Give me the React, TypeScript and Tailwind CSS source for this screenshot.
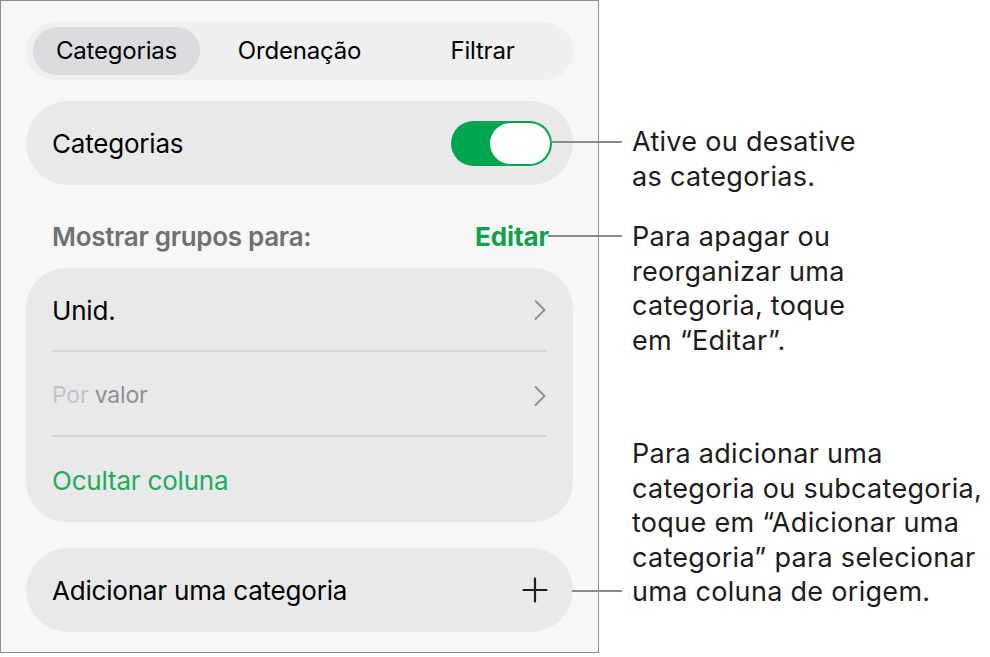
import React from "react";

function Chevron() {
  return (
    <svg width="14" height="22" viewBox="0 0 14 22" fill="none">
      <path d="M2.5 2 L11.5 11 L2.5 20" stroke="#8e8e93" strokeWidth="1.8" strokeLinecap="round" strokeLinejoin="round" />
    </svg>
  );
}

function Plus() {
  return (
    <svg width="26" height="26" viewBox="0 0 26 26" fill="none">
      <path d="M13 1.5 V24.5 M1.5 13 H24.5" stroke="#1c1c1e" strokeWidth="2.2" strokeLinecap="round" />
    </svg>
  );
}

export default function App() {
  return (
    <div
      className="relative flex w-[990px] h-[657px] bg-white text-black"
      style={{ fontFamily: "Inter, 'Noto Sans', sans-serif" }}
    >
      {/* Panel */}
      <div className="flex flex-col w-[599px] h-[653px] border border-[#8e8e8e] bg-[#f7f7f8] px-[25px] pt-[21px]">
        {/* Segmented control */}
        <div className="grid grid-cols-3 gap-[16px] h-[58px] rounded-full bg-[#efeff0] px-[7px] py-[5px]">
          <div className="flex items-center justify-center rounded-full bg-[#dcdce0] text-[24px] tracking-[-0.2px]">
            Categorias
          </div>
          <div className="flex items-center justify-center text-[24px] tracking-[-0.2px]">Ordenação</div>
          <div className="flex items-center justify-center text-[24px] tracking-[-0.2px]">Filtrar</div>
        </div>

        {/* Toggle card */}
        <div className="mt-[21px] flex items-center justify-between h-[84px] rounded-[42px] bg-[#e9e9eb] pl-[26px] pr-[21px]">
          <span className="text-[26px] tracking-[-0.2px]">Categorias</span>
          <div className="relative w-[101px] h-[45px] rounded-full bg-[#00a54f]">
            <div className="absolute right-[2px] top-[2px] w-[60px] h-[41px] rounded-full bg-white" />
          </div>
        </div>

        {/* Header */}
        <div className="flex items-center justify-between h-[83px] pt-[19px] pl-[26px] pr-[24px]">
          <span className="text-[26px] font-semibold text-[#707074] tracking-[-0.3px]">Mostrar grupos para:</span>
          <span className="text-[26px] font-bold text-[#12a04c] tracking-[-0.1px]">Editar</span>
        </div>

        {/* Group card */}
        <div className="flex flex-col rounded-[40px] bg-[#e9e9eb] px-[26px]">
          <div className="flex items-center justify-between h-[84px] pt-[2px] border-b-2 border-[#d4d4d6]">
            <span className="text-[26px] tracking-[-0.2px]">Unid.</span>
            <Chevron />
          </div>
          <div className="flex items-center justify-between h-[85px] pt-[4px] border-b-2 border-[#d4d4d6]">
            <span className="text-[23px] tracking-[-0.2px]">
              <span className="text-[#c3c3c7]">Por</span> <span className="text-[#8e8e93]">valor</span>
            </span>
            <Chevron />
          </div>
          <div className="flex items-center h-[85px] pt-[2px]">
            <span className="text-[26px] text-[#1cae57] tracking-[-0.2px]">Ocultar coluna</span>
          </div>
        </div>

        {/* Add card */}
        <div className="mt-[26px] flex items-center justify-between h-[84px] rounded-[42px] bg-[#e9e9eb] pl-[26px] pr-[25px]">
          <span className="text-[26px] tracking-[-0.2px]">Adicionar uma categoria</span>
          <Plus />
        </div>
      </div>

      {/* Callouts */}
      <div className="flex flex-col pl-[33px] pt-[125px] text-[27px] leading-[34.5px] tracking-[0.3px] text-[#1c1c1e]">
        <div>
          Ative ou desative
          <br />
          as categorias.
        </div>
        <div className="mt-[26px]">
          Para apagar ou
          <br />
          reorganizar uma
          <br />
          categoria, toque
          <br />
          em “Editar”.
        </div>
        <div className="mt-[79px]">
          Para adicionar uma
          <br />
          categoria ou subcategoria,
          <br />
          toque em “Adicionar uma
          <br />
          categoria” para selecionar
          <br />
          uma coluna de origem.
        </div>
      </div>

      {/* Leader lines */}
      <div className="absolute left-[551px] top-[141px] w-[71px] h-[2px] bg-[#8a8a8a]" />
      <div className="absolute left-[548px] top-[235px] w-[74px] h-[2px] bg-[#8a8a8a]" />
      <div className="absolute left-[572px] top-[590px] w-[50px] h-[2px] bg-[#8a8a8a]" />
    </div>
  );
}
